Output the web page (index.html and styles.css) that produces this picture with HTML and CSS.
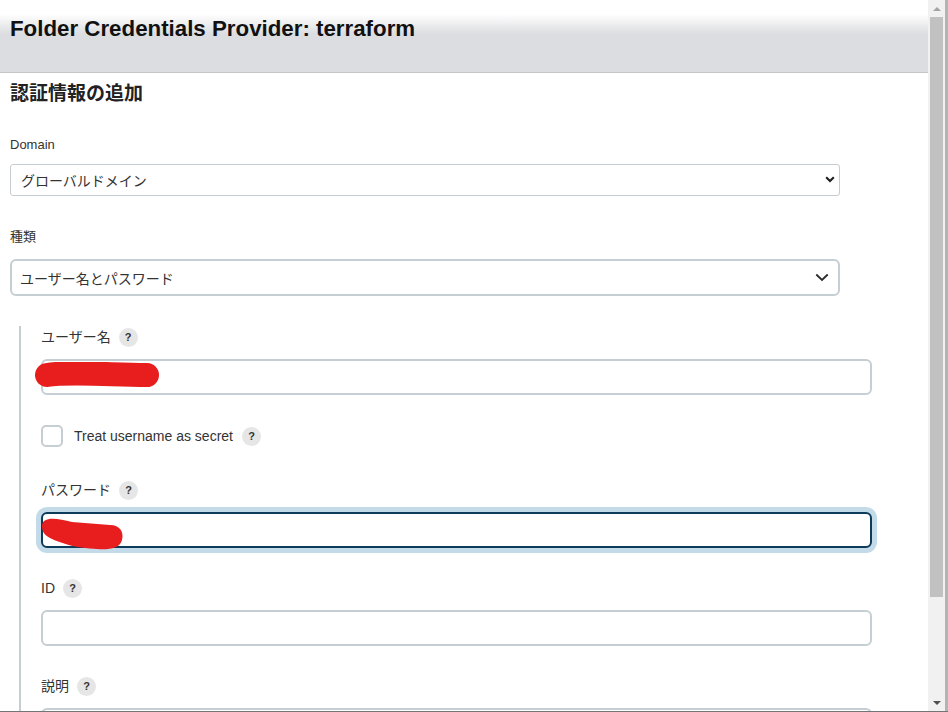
FILE: index.html
```html
<!DOCTYPE html>
<html lang="ja">
<head>
<meta charset="utf-8">
<title>Folder Credentials Provider: terraform</title>
<link rel="stylesheet" href="styles.css">
</head>
<body>
<div class="window">
  <div class="page">
    <header class="page-header">
      <h1 class="page-title">Folder Credentials Provider: terraform</h1>
    </header>
    <main class="content">
      <h2 class="section-title jp">認証情報の追加</h2>

      <div class="group group-domain">
        <div class="label">Domain</div>
        <div class="select-wrap">
          <select class="select select-small jp"><option>グローバルドメイン</option></select>
          <svg class="chev chev-small" width="10" height="7" viewBox="0 0 10 7"><path d="M1.2 1.3 L5 5 L8.8 1.3" fill="none" stroke="#1e1e1e" stroke-width="2.1"/></svg>
        </div>
      </div>

      <div class="group group-kind">
        <div class="label label-jp jp">種類</div>
        <div class="select-wrap">
          <select class="select select-large jp"><option>ユーザー名とパスワード</option></select>
          <svg class="chev chev-large" width="14" height="9" viewBox="0 0 14 9"><path d="M1.3 1.5 L7 7 L12.7 1.5" fill="none" stroke="#2b2b2b" stroke-width="1.8"/></svg>
        </div>
      </div>

      <div class="nested">
        <div class="field">
          <div class="field-label"><span class="jp">ユーザー名</span><span class="help">?</span></div>
          <div class="input-wrap">
            <input class="input" type="text">
            <svg class="redact redact-user" width="130" height="30" viewBox="0 0 130 30"><path d="M12 13 C 30 10, 60 12, 112 13" fill="none" stroke="#e81e1e" stroke-width="24" stroke-linecap="round"/></svg>
          </div>
        </div>

        <div class="check-row">
          <span class="checkbox"></span>
          <span class="check-text">Treat username as secret</span>
          <span class="help">?</span>
        </div>

        <div class="field field-after-check">
          <div class="field-label"><span class="jp">パスワード</span><span class="help">?</span></div>
          <div class="input-wrap">
            <input class="input is-focused" type="password">
            <svg class="redact redact-pass" width="90" height="40" viewBox="0 0 90 40"><path d="M3 12 C 3 2, 18 4, 33 8 L 71 11 C 81 11, 85 18, 83 26 C 81 35, 68 36, 58 35 C 38 34, 23 30, 11 24 C 5 21, 3 17, 3 12 Z" fill="#e81e1e"/></svg>
          </div>
        </div>

        <div class="field">
          <div class="field-label"><span>ID</span><span class="help">?</span></div>
          <div class="input-wrap"><input class="input" type="text"></div>
        </div>

        <div class="field">
          <div class="field-label"><span class="jp">説明</span><span class="help">?</span></div>
          <div class="input-wrap"><textarea class="input textarea"></textarea></div>
        </div>
      </div>
    </main>
  </div>
  <div class="scrollbar">
    <div class="sb-button"><span class="arrow-up"></span></div>
    <div class="sb-track"><div class="sb-thumb"></div></div>
    <div class="sb-button"><span class="arrow-down"></span></div>
  </div>
  <div class="edge"></div>
</div>
</body>
</html>
```

FILE: styles.css
```css
html, body {
  margin: 0;
  padding: 0;
  background: #ffffff;
}

body {
  font-family: "Liberation Sans", "Noto Sans CJK JP", sans-serif;
  color: #333333;
}

.jp {
  font-family: "Noto Sans CJK JP", "Liberation Sans", sans-serif;
}

.window {
  display: flex;
  height: 711px;
  border-bottom: 1px solid #747474;
  overflow: hidden;
}

.page {
  flex: 1;
  min-width: 0;
  overflow: hidden;
}

/* header */
.page-header {
  height: 56px;
  padding: 16px 10px 0;
  border-bottom: 1px solid #c6c6c6;
  background: linear-gradient(to bottom, #ffffff 0, #ffffff 14px, #dcdde0 34px, #dcdde0 100%);
}

.page-title {
  margin: 0;
  font-size: 22.3px;
  line-height: 25px;
  font-weight: bold;
  color: #111111;
}

.content {
  padding: 0 0 0 10px;
}

.section-title {
  margin: 7px 0 0;
  font-size: 19px;
  line-height: 24px;
  font-weight: bold;
  color: #222222;
}

.label {
  font-size: 13px;
  line-height: 18px;
  color: #333333;
}

.group-domain {
  margin-top: 32px;
}

.group-domain .label {
  margin-bottom: 10px;
}

.group-kind {
  margin-top: 31px;
}

.group-kind .label {
  margin-bottom: 14px;
}

.select-wrap {
  position: relative;
  width: 830px;
}

.select {
  display: block;
  width: 100%;
  box-sizing: border-box;
  appearance: none;
  -webkit-appearance: none;
  background: #ffffff;
  color: #333333;
  font-size: 14px;
  margin: 0;
  outline: none;
}

.select-small {
  height: 32px;
  border: 1px solid #c7ccd1;
  border-radius: 3px;
  padding: 0 30px 0 10px;
}

.select-large {
  height: 37px;
  border: 2px solid #c5ced3;
  border-radius: 6px;
  padding: 0 30px 0 8px;
}

.chev {
  position: absolute;
  display: block;
}

.chev-small {
  right: 5px;
  top: 12px;
}

.chev-large {
  right: 11px;
  top: 14px;
}

/* nested block */
.nested {
  margin: 30px 0 0 9px;
  padding: 1px 0 0 20px;
  border-left: 2px solid #c5ced3;
  height: 400px;
}

.field + .field {
  margin-top: 30px;
}

.field-after-check {
  margin-top: 33px;
}

.field-label {
  display: flex;
  align-items: center;
  gap: 8px;
  height: 20px;
  font-size: 14px;
  line-height: 20px;
  color: #333333;
}

.field-label .jp {
  position: relative;
  top: -1px;
}

.help {
  display: inline-flex;
  align-items: center;
  justify-content: center;
  width: 19px;
  height: 19px;
  border-radius: 50%;
  background: #e6e6e6;
  color: #333333;
  font-family: "Liberation Sans", sans-serif;
  font-size: 11px;
  font-weight: bold;
  line-height: 1;
}

.input-wrap {
  position: relative;
  width: 831px;
  margin-top: 12px;
}

.input {
  display: block;
  width: 100%;
  height: 36px;
  box-sizing: border-box;
  border: 2px solid #c5ced3;
  border-radius: 6px;
  background: #ffffff;
  padding: 0 8px;
  margin: 0;
  font: inherit;
  outline: none;
}

.input.is-focused {
  border-color: #0d3b5a;
  box-shadow: 0 0 0 5px #c3dbe9;
}

.textarea {
  height: 80px;
  resize: none;
}

.redact {
  position: absolute;
  display: block;
}

.redact-user {
  left: -6px;
  top: 3px;
}

.redact-pass {
  left: -2px;
  top: 2px;
}

.check-row {
  display: flex;
  align-items: center;
  height: 22px;
  margin-top: 30px;
  font-size: 14px;
  color: #333333;
}

.checkbox {
  width: 22px;
  height: 22px;
  box-sizing: border-box;
  border: 2px solid #c5ced3;
  border-radius: 5px;
  background: #ffffff;
  margin-right: 11px;
}

.check-text {
  margin-right: 9px;
}

/* scrollbar */
.scrollbar {
  width: 17px;
  flex: 0 0 17px;
  background: #f1f1f1;
  display: flex;
  flex-direction: column;
}

.sb-button {
  height: 17px;
  flex: 0 0 17px;
  display: flex;
  align-items: center;
  justify-content: center;
}

.sb-track {
  flex: 1;
}

.sb-thumb {
  margin: 0 2px;
  height: 580px;
  background: #c1c1c1;
}

.arrow-up {
  width: 0;
  height: 0;
  border-left: 4px solid transparent;
  border-right: 4px solid transparent;
  border-bottom: 4px solid #a3a3a3;
}

.arrow-down {
  width: 0;
  height: 0;
  border-left: 4px solid transparent;
  border-right: 4px solid transparent;
  border-top: 4px solid #505050;
}

.edge {
  width: 3px;
  flex: 0 0 3px;
  background: #b4b4b4;
}
```
